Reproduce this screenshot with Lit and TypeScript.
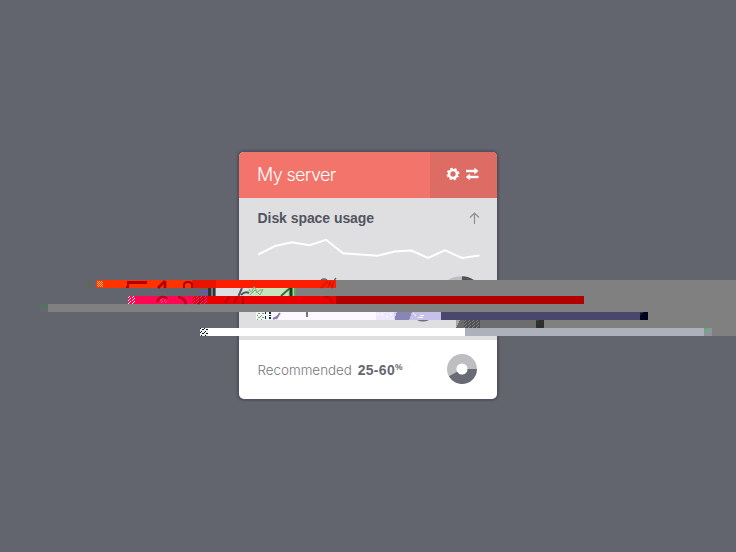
import { LitElement, html, svg, css } from "lit";
import { customElement } from "lit/decorators.js";

// Horizontal bands: x, y, width, colour; each is one 8px block row high.
const bands: [number, number, number, string][] = [
  [96, 280, 120, "#ff3300"], [192, 280, 24, "#e91400"], [216, 280, 120, "#ff1d00"], [336, 280, 400, "#808080"],
  [216, 288, 32, "#dedfe2"], [248, 288, 47, "#c7e5bc"], [288, 288, 8, "#a0dc98"], [296, 288, 440, "#808080"],
  [128, 296, 80, "#ff0753"], [192, 296, 16, "#e30022"], [208, 296, 128, "#ea0000"], [336, 296, 248, "#b10000"], [584, 296, 152, "#808080"],
  [48, 304, 688, "#808080"],
  [272, 312, 104, "#fdf8ff"], [376, 312, 20, "#eee8ff"], [395, 312, 18, "#8986b4"], [412, 312, 29, "#c7c0ea"], [441, 312, 199, "#49476c"], [640, 312, 8, "#000020"], [648, 312, 88, "#808080"],
  [456, 320, 8, "#6b6b6e"], [464, 320, 16, "#505052"], [480, 320, 56, "#6d6d70"], [536, 320, 8, "#2d2e2d"], [544, 320, 192, "#808080"],
  [208, 328, 257, "#ffffff"], [465, 328, 239, "#adb1bb"], [704, 328, 8, "#8e949b"], [712, 328, 24, "#808080"],
];

@customElement("usage-ring")
class UsageRing extends LitElement {
  static styles = css`:host{display:block;width:30px;height:30px}svg{display:block}`;
  render() {
    return html`<svg width="30" height="30" viewBox="0 0 30 30">
      <circle cx="15" cy="15" r="10.3" fill="none" stroke="#bebec2" stroke-width="9.4"/>
      <path d="M25.3 15A10.3 10.3 0 0 1 6 20" fill="none" stroke="#696b74" stroke-width="9.4"/>
    </svg>`;
  }
}

@customElement("app-root")
class AppRoot extends LitElement {
  static styles = css`
    :host { display:flex; position:relative; width:736px; height:552px; overflow:hidden; justify-content:center;
      background:#62656e; font-family:"Liberation Sans",Arial,sans-serif; color:#52545f }
    .card { width:258px; height:247px; margin-top:152px; border-radius:5px; overflow:hidden; background:#fff;
      box-shadow:0 0 2px 2px #50525e; display:flex; flex-direction:column }
    header { display:flex; height:45.5px; background:#f2746b; color:#fff }
    h1 { margin:0; padding-left:18px; flex:1; font:300 18px/45px "Inter","Liberation Sans",sans-serif; letter-spacing:-.64px }
    .tools { width:67px; background:#dd6c65; display:flex; align-items:center; justify-content:center; gap:6px; box-sizing:border-box; padding:0 2px 2px 0 }
    .usage { height:142px; background:#dfdfe1; padding:0 17.5px 0 18.5px; box-sizing:border-box }
    .row { display:flex; align-items:center; justify-content:space-between; height:40px }
    h2 { font-size:14px; line-height:18px; margin:0; letter-spacing:-.06px }
    svg { display:block }
    .recommend { display:flex; flex:1; align-items:center; justify-content:space-between; padding:2px 20px 3px 18.5px; box-sizing:border-box }
    .recommend usage-ring { margin-top:1px }
    p { margin:2px 0 0; color:#77787c; font:300 13.4px/18px "Inter","Liberation Sans",sans-serif; white-space:nowrap }
    b { font:700 14px/18px "Liberation Sans",sans-serif; color:#666770; margin-left:2px; letter-spacing:.3px }
    sup { font-size:8.5px; line-height:0; vertical-align:5px }
    .noise { position:absolute; left:0; top:0; pointer-events:none }
  `;
  render() {
    return html`
      <section class="card">
        <header><h1><span>My server</span></h1><div class="tools">
          <svg width="14" height="14" viewBox="0 0 14 14" fill="none" stroke="#fff">
            <circle cx="7" cy="7" r="3.9" stroke-width="2.5"/><circle cx="7" cy="7" r="5.4" stroke-width="1.9" stroke-dasharray="2.35 1.891" stroke-dashoffset="1.17" transform="rotate(22.5 7 7)"/>
          </svg>
          <svg width="13" height="12" viewBox="0 0 13 12" fill="#fff"><path d="M0 2h8.5V0L12.3 3 8.5 6V4H0zM12.3 10H3.8v2L0 9l3.8-3v2h8.5z" stroke="#fff" stroke-width=".4"/></svg>
        </div></header>
        <div class="usage">
          <div class="row"><h2>Disk space usage</h2>
            <svg width="12" height="14" viewBox="0 0 12 14" fill="none" stroke="#8d8e94" stroke-width="1.2"><path d="M6.5 13V2M2 6.5L6.5 2 11 6.5"/></svg></div>
          <svg width="222" height="24" viewBox="257.5 238 222 24"><path d="M257.5 254.5L274.5 246 291.5 242.3 309 245.3 325.7 239.8 342.5 253.2 377 255.8 394 251.6 411 250.5 427.5 258 444.5 250.3 461.5 258 479 255.6" fill="none" stroke="#fff" stroke-width="2"/></svg>
        </div>
        <div class="recommend"><p>Recommended <b>25-60<sup>%</sup></b></p><usage-ring></usage-ring></div>
      </section>
      <svg class="noise" width="736" height="552" viewBox="0 0 736 552" shape-rendering="crispEdges">
        <defs>
          <pattern id="hot" width="2" height="2" patternUnits="userSpaceOnUse"><path d="M0 0h1v1H0zM1 1h1v1H1z" fill="#f5c070"/></pattern>
          <pattern id="pale" width="4" height="3" patternUnits="userSpaceOnUse"><path d="M0 0h1v1H0zM2 1h1v1H2zM1 2h1v1H1z" fill="#fff"/></pattern>
          <pattern id="ink" width="4" height="4" patternUnits="userSpaceOnUse"><path d="M0 0h1v1H0zM2 1h2v1H2zM1 3h1v1H1z" fill="#15151c"/></pattern>
        </defs>
        <g shape-rendering="auto">
          <path d="M448 280Q453 276.5 462 276.2V280Z" fill="#bebec2"/><path d="M462 276.2Q469 276.5 474 280H462Z" fill="#50515b"/>
          <path d="M321 280q3-2 6 0M334.5 280l1.5-2" fill="none" stroke="#62636b" stroke-width="1.3"/>
        </g>
        ${bands.map(([x, y, w, c]) => svg`<rect x=${x} y=${y} width=${w} height="8" fill=${c}/>`)}
        <rect x="97" y="281" width="6" height="6" fill="url(#hot)"/>
        <rect x="128" y="296" width="8" height="8" fill="url(#pale)"/><rect x="160" y="297" width="8" height="6" fill="url(#pale)" opacity=".35"/>
        <g fill="none" stroke="#ad0000" stroke-width="2.6">
          <path d="M147 282.5h-18.5l-1 5.5"/><path d="M165 281l-7 7M165 281v7" shape-rendering="auto"/>
          <path d="M184 288v-3q0-3 4-3t4 3v3" stroke-width="2" shape-rendering="auto"/>
        </g>
        <g fill="none" stroke="#b60018" stroke-width="2.6" shape-rendering="auto">
          <path d="M157 302q2-5 6-5 3 0 4 2M178 297q7 1 8 7M204 297l-6 7"/>
          <path d="M225 303l4-6M234 303l3-6M243 297v7" stroke="#a80000" stroke-width="2"/>
          <path d="M324 297q8-1 8 7" stroke="#c80000" stroke-width="2"/>
          <path d="M321 288l7-7M328 287l2-5 2 5 2-6" stroke="#c31b00" stroke-width="1.3"/>
        </g>
        <rect x="192" y="296" width="16" height="8" fill="url(#pale)" opacity=".2"/>
        <rect x="200" y="288" width="8" height="8" fill="#6a6847"/><path d="M200 290h8v2h-8zM200 293h8v2h-8z" fill="#6557bd"/>
        <path d="M208 288h3v8h-3zM213 288h2v8h-2z" fill="#20212b" opacity=".75"/><path d="M211 288h2v8h-2zM215 288h1v8h-1z" fill="#777"/>
        <g fill="none" stroke="#55565e" stroke-width="2" shape-rendering="auto">
          <path d="M242 288l-3.5 8M241 295q4-4 8-2"/><path d="M281 296l9-8" stroke="#3b6b35"/><path d="M291 288v8" stroke="#173d1e" stroke-width="3"/>
          <path d="M249 289q3 6 4 0t4 4q3-5 6-2M250 295l5-5 5 5 3-6" stroke="#7cad86" stroke-width="1"/>
        </g>
        <path d="M294 288h2v8h-2z" fill="#64a25d"/>
        <rect x="40" y="304" width="8" height="8" fill="#636a6b"/><path d="M40 304h1v1h-1zM43 305h2v1h-2zM41 307h1v1h-1zM46 304h1v1h-1z" fill="#149632"/>
        <rect x="88" y="280" width="3" height="8" fill="#606852"/>
        <rect x="256" y="312" width="16" height="8" fill="#eef7f2"/><rect x="257" y="313" width="7" height="7" fill="url(#ink)" opacity=".45"/>
        <path d="M265 312h1v2h-1zM265 316h1v3h-1zM269 312h2v2h-2zM269 315h2v1h-2zM269 317h2v2h-2z" fill="#222033"/>
        <path d="M273 319l4-2 3-4M276 319l2-3" fill="none" stroke="#8780af" stroke-width="2" shape-rendering="auto"/><path d="M306 312h2v5h-2z" fill="#77719c"/>
        <path d="M377 314l2 2M382 313l1 3M386 316h2M390 314h2M413 313l3 3M418 317h5M424 315h-4" fill="none" stroke="#fff" stroke-width="1"/>
        <path d="M394 320l3-8h-3z" fill="#d6cef4"/><path d="M409 320l3-8v8z" fill="#c7c0ea"/>
        <path d="M417 320q6 3 12 0z" fill="#6b6c75" shape-rendering="auto"/>
        <path d="M456 328l4-8h-4z" fill="#a8a9a4"/><rect x="464" y="320" width="16" height="8" fill="url(#pale)" opacity=".3"/>
        <path d="M536 320h3v1h-3zM537 322h1v1h-1z" fill="#13551d"/><path d="M640 312h3v1h-3zM640 314h1v1h-1z" fill="#075526"/>
        <rect x="200" y="328" width="8" height="8" fill="#eee"/><rect x="200" y="328" width="8" height="8" fill="url(#ink)"/>
        <path d="M704 328h2v1h-2zM706 329h1v1h-1zM704 331h1v1h-1zM708 328h1v1h-1z" fill="#13d92c"/>
      </svg>`;
  }
}
